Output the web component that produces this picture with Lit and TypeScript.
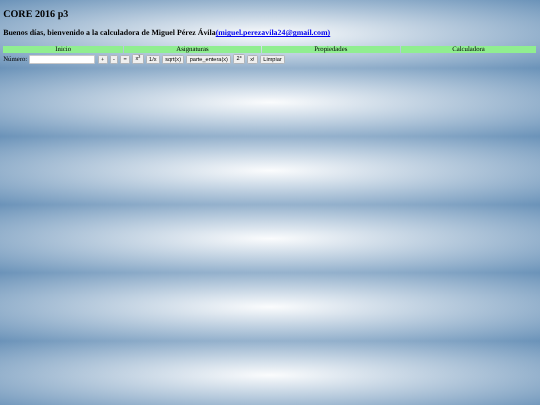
import { LitElement, html, css } from "lit";
import { customElement } from "lit/decorators.js";

@customElement("app-root")
export class AppRoot extends LitElement {
  static styles = css`
    :host {
      display: block;
      box-sizing: border-box;
      min-height: 100vh;
      padding: 0 3.2px;
      font-family: "Liberation Serif", "Times New Roman", serif;
      font-size: 6.75px;
      line-height: 7.7px;
      color: #000;
      text-rendering: geometricPrecision;
      background-image: radial-gradient(ellipse farthest-corner, #fbfcfd 0%, #6b93b9 100%);
      background-size: 100% 68.2px;
    }
    .content { filter: blur(0.35px); padding-top: 8.6px; }
    h2 {
      margin: 0;
      font-size: 10.12px;
      line-height: 11.6px;
      font-weight: bold;
    }
    h3 {
      margin: 8.2px 0 0;
      font-size: 7.9px;
      line-height: 9px;
      font-weight: bold;
    }
    a { color: #0000ee; text-decoration: underline; }
    .nav {
      display: grid;
      grid-template-columns: 120px 136.8px 138px 135.6px;
      column-gap: 0.9px;
      margin-top: 8.3px;
      height: 7.8px;
    }
    .nav div {
      background: #90ee90;
      text-align: center;
      line-height: 7.8px;
    }
    .calc {
      display: flex;
      align-items: flex-end;
      height: 10px;
      margin-top: 1px;
    }
    .label { align-self: flex-end; margin-right: 1.8px; line-height: 9px; }
    input {
      box-sizing: border-box;
      width: 66px;
      height: 9px;
      margin: 0 2.6px 0 0;
      padding: 0;
      border: 0.4px solid #c8c8c8;
      border-radius: 1px;
      background: #fff;
    }
    button {
      box-sizing: border-box;
      height: 9px;
      margin: 0 1.9px 0 0;
      padding: 0 2.4px;
      border: 0.7px solid #b0b4b8;
      border-radius: 1.2px;
      background: #efefef;
      color: #000;
      font-family: "Liberation Sans", Arial, sans-serif;
      font-size: 5.6px;
      line-height: 6.4px;
      white-space: nowrap;
      text-rendering: geometricPrecision;
    }
    button.tall { height: 10px; }
    sup { font-size: 3.8px; line-height: 0; vertical-align: 1.9px; }
  `;

  render() {
    return html`
      <div class="content">
        <h2>CORE 2016 p3</h2>
        <h3>Buenos días, bienvenido a la calculadora de Miguel Pérez Ávila<a href="#">(miguel.perezavila24@gmail.com)</a></h3>
        <div class="nav">
          <div>Inicio</div>
          <div>Asignaturas</div>
          <div>Propiedades</div>
          <div>Calculadora</div>
        </div>
        <div class="calc">
          <span class="label">Número:</span>
          <input type="text" />
          <button>+</button>
          <button>-</button>
          <button>=</button>
          <button class="tall">x<sup>2</sup></button>
          <button>1/x</button>
          <button>sqrt(x)</button>
          <button>parte_entera(x)</button>
          <button class="tall">2<sup>x</sup></button>
          <button>x!</button>
          <button>Limpiar</button>
        </div>
      </div>
    `;
  }
}
